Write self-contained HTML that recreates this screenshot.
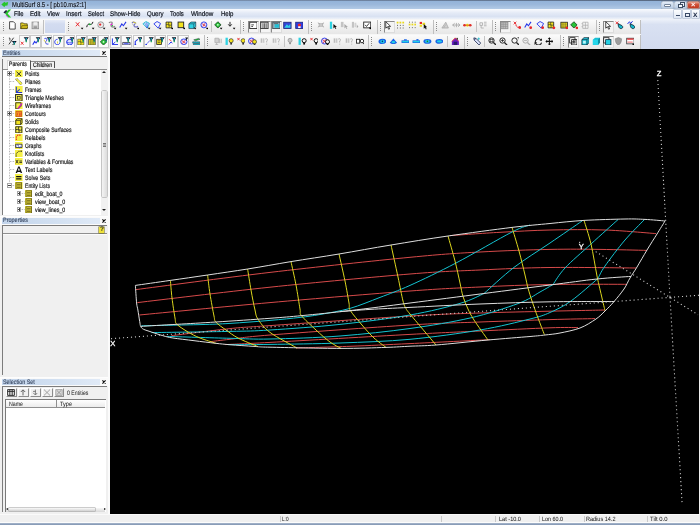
<!DOCTYPE html><html><head><meta charset="utf-8"><title>MultiSurf 8.5 - [ pb10.ms2:1]</title><style>
html,body{margin:0;padding:0;background:#000;}
body{width:700px;height:525px;overflow:hidden;position:relative;font-family:"Liberation Sans",sans-serif;}
#app{position:absolute;left:0;top:0;width:700px;height:525px;overflow:hidden;background:#f0f0f0;}
.abs{position:absolute;}
.t{position:absolute;white-space:nowrap;line-height:1;color:#111;transform-origin:0 0;}
#app{will-change:transform;}
#title{left:0;top:0;width:700px;height:9px;background:linear-gradient(to bottom,#7d99bd 0,#93b3d9 12%,#9bb8db 50%,#b2cae6 100%);}
#menu{left:0;top:9px;width:700px;height:10px;background:linear-gradient(to bottom,#f9fbfe 0,#e4eaf6 40%,#d9e2f2 75%,#eef2f9 100%);}
#tbarea{left:0;top:19px;width:700px;height:30px;background:linear-gradient(to bottom,#eef2fa 0,#d9e1f2 18%,#d2daee 100%);}
#tbl{left:0;top:19px;width:641px;height:30px;background:#f6f6f6;}
.chkbtn{position:absolute;width:11px;height:12.4px;box-sizing:border-box;border:0.8px solid #c9c9c9;background:#fbfbfb;}
.tb{position:absolute;height:14px;background:linear-gradient(to bottom,#fbfbfb 0,#f1f1f1 50%,#e6e6e6 100%);border-right:1px solid #bfbfbf;box-sizing:border-box;}
.grip{position:absolute;width:1px;height:9px;background-image:linear-gradient(to bottom,#8a8a8a 50%,transparent 50%);background-size:1px 2px;}
.sep{position:absolute;width:1px;height:11px;background:#c4c4c4;}
.ic{position:absolute;width:8.8px;height:8.8px;}
.selbtn{position:absolute;box-sizing:border-box;border:0.9px solid;border-color:#8a8a8a #dcdcdc #dcdcdc #8a8a8a;background:#f4f4f4;}
#left{left:0;top:49px;width:110px;height:465px;background:#f0f0f0;}
.hdr{position:absolute;left:2px;width:98px;height:5.7px;background:linear-gradient(to right,#c2d4eb 0,#d2e0f1 55%,#e0eaf7 100%);}
#canvas{left:110px;top:49px;width:589px;height:465px;background:#000;}
#status{left:0;top:514px;width:700px;height:11px;background:#f0f0f0;}
</style></head><body><div id="app"><div id="title" class="abs"><svg class="abs" style="left:1px;top:0.5px" width="7.5" height="7" viewBox="0 0 11 9"><path d="M0.5 4.5 L5 0.5 L6.5 2 L10.5 1 L9.5 6 L6 6.5 L5 8.5 Z" fill="#27c62b"/></svg><div class="t" style="left:12px;top:0.8px;font-size:7px;color:#0d1522;font-weight:normal;transform:rotate(0.03deg) scaleX(0.842);-webkit-text-stroke:0.2px #0d1522;text-shadow:0 0 1.5px #e6eef9,0 0 2.5px #dbe7f5;">MultiSurf 8.5 - [ pb10.ms2:1]</div><div class="abs" style="left:0;top:0;width:700px;height:0.7px;background:linear-gradient(to right,#8aa2c4,#56677f)"></div><div class="abs" style="left:661.5px;top:1.6px;width:11px;height:6px;border-radius:1px;background:linear-gradient(#e3ecf7,#b9cde6);box-shadow:0 0 0 0.6px #f2f6fb,0 0 0 1.1px #7c90ab"></div><div class="abs" style="left:664.5px;top:4.6px;width:5px;height:1.6px;background:#fff;box-shadow:0 0 0 0.6px #3d4d63"></div><div class="abs" style="left:674.5px;top:1.6px;width:11px;height:6px;border-radius:1px;background:linear-gradient(#e3ecf7,#b9cde6);box-shadow:0 0 0 0.6px #f2f6fb,0 0 0 1.1px #7c90ab"></div><div class="abs" style="left:679.5px;top:2.4px;width:3.6px;height:2.6px;border:0.7px solid #3d4d63;background:#eef3fa"></div><div class="abs" style="left:677.5px;top:3.8px;width:3.6px;height:2.6px;border:0.7px solid #3d4d63;background:#f6f9fd"></div><div class="abs" style="left:687.5px;top:1.6px;width:11.5px;height:6px;border-radius:1px;background:linear-gradient(#e7a392,#cf4f37 45%,#c23a22);box-shadow:0 0 0 0.6px #f2d9d3,0 0 0 1.1px #7a3a30"></div><div class="t" style="left:690.6px;top:0.9px;font-size:7.4px;color:#fff;font-weight:bold;transform:rotate(0.03deg);">&#215;</div></div><div id="menu" class="abs"><svg class="abs" style="left:3px;top:0.3px" width="9" height="9" viewBox="0 0 9 9"><path d="M8.2 0.6 L4.6 4.4 L8.2 8.4 L5.6 8.4 L2 4.4 L5.6 0.6 Z" fill="#27c62b"/><path d="M0.4 3.4 L3 1 L4.4 2 L2 4.4 Z" fill="#1a2238"/><path d="M3 6 L5 8.4" stroke="#b030c0" stroke-width="0.8"/></svg><div class="t" style="left:14px;top:1.7px;font-size:6.8px;color:#0e131d;font-weight:normal;transform:rotate(0.03deg) scaleX(0.867);-webkit-text-stroke:0.18px #0e131d;">File</div><div class="t" style="left:30px;top:1.7px;font-size:6.8px;color:#0e131d;font-weight:normal;transform:rotate(0.03deg) scaleX(0.896);-webkit-text-stroke:0.18px #0e131d;">Edit</div><div class="t" style="left:47px;top:1.7px;font-size:6.8px;color:#0e131d;font-weight:normal;transform:rotate(0.03deg) scaleX(0.855);-webkit-text-stroke:0.18px #0e131d;">View</div><div class="t" style="left:66px;top:1.7px;font-size:6.8px;color:#0e131d;font-weight:normal;transform:rotate(0.03deg) scaleX(0.911);-webkit-text-stroke:0.18px #0e131d;">Insert</div><div class="t" style="left:88px;top:1.7px;font-size:6.8px;color:#0e131d;font-weight:normal;transform:rotate(0.03deg) scaleX(0.847);-webkit-text-stroke:0.18px #0e131d;">Select</div><div class="t" style="left:110px;top:1.7px;font-size:6.8px;color:#0e131d;font-weight:normal;transform:rotate(0.03deg) scaleX(0.917);-webkit-text-stroke:0.18px #0e131d;">Show-Hide</div><div class="t" style="left:147px;top:1.7px;font-size:6.8px;color:#0e131d;font-weight:normal;transform:rotate(0.03deg) scaleX(0.891);-webkit-text-stroke:0.18px #0e131d;">Query</div><div class="t" style="left:170px;top:1.7px;font-size:6.8px;color:#0e131d;font-weight:normal;transform:rotate(0.03deg) scaleX(0.869);-webkit-text-stroke:0.18px #0e131d;">Tools</div><div class="t" style="left:191.3px;top:1.7px;font-size:6.8px;color:#0e131d;font-weight:normal;transform:rotate(0.03deg) scaleX(0.926);-webkit-text-stroke:0.18px #0e131d;">Window</div><div class="t" style="left:220.6px;top:1.7px;font-size:6.8px;color:#0e131d;font-weight:normal;transform:rotate(0.03deg) scaleX(0.887);-webkit-text-stroke:0.18px #0e131d;">Help</div><div class="abs" style="left:674px;top:1px;width:7px;height:7.5px;background:linear-gradient(#fdfeff,#dfe7f4);box-shadow:0 0 0 0.6px #a9b6cb"></div><div class="abs" style="left:683px;top:1px;width:7px;height:7.5px;background:linear-gradient(#fdfeff,#dfe7f4);box-shadow:0 0 0 0.6px #a9b6cb"></div><div class="abs" style="left:691.5px;top:1px;width:7px;height:7.5px;background:linear-gradient(#fdfeff,#dfe7f4);box-shadow:0 0 0 0.6px #a9b6cb"></div><div class="abs" style="left:676px;top:6.3px;width:3.5px;height:1px;background:#3a4a66"></div><div class="abs" style="left:685px;top:3.5px;width:3px;height:2.5px;border:0.7px solid #3a4a66"></div><div class="t" style="left:692.8px;top:1.7px;font-size:8px;color:#1f2c47;font-weight:bold;transform:rotate(0.03deg);">x</div></div><div id="tbarea" class="abs"></div><div id="tbl" class="abs"></div><div class="tb" style="left:0px;top:19.5px;width:44px"></div><div class="tb" style="left:66px;top:19.5px;width:175px"></div><div class="tb" style="left:241px;top:19.5px;width:68px"></div><div class="tb" style="left:309px;top:19.5px;width:69px"></div><div class="tb" style="left:378px;top:19.5px;width:56px"></div><div class="tb" style="left:434px;top:19.5px;width:59px"></div><div class="tb" style="left:493px;top:19.5px;width:104px"></div><div class="tb" style="left:597px;top:19.5px;width:44px"></div><div class="tb" style="left:0px;top:34.5px;width:205px"></div><div class="tb" style="left:205px;top:34.5px;width:164px"></div><div class="tb" style="left:369px;top:34.5px;width:96px"></div><div class="tb" style="left:465px;top:34.5px;width:96px"></div><div class="tb" style="left:561px;top:34.5px;width:80px"></div><div class="grip" style="left:3px;top:22.0px"></div><div class="grip" style="left:68px;top:22.0px"></div><div class="grip" style="left:243px;top:22.0px"></div><div class="grip" style="left:311px;top:22.0px"></div><div class="grip" style="left:380px;top:22.0px"></div><div class="grip" style="left:436px;top:22.0px"></div><div class="grip" style="left:495px;top:22.0px"></div><div class="grip" style="left:599px;top:22.0px"></div><div class="grip" style="left:3px;top:37.0px"></div><div class="grip" style="left:207px;top:37.0px"></div><div class="grip" style="left:371px;top:37.0px"></div><div class="grip" style="left:467px;top:37.0px"></div><div class="grip" style="left:563px;top:37.0px"></div><div class="selbtn" style="left:248px;top:20.5px;width:11px;height:12px"></div><div class="selbtn" style="left:259.5px;top:20.5px;width:11px;height:12px"></div><div class="selbtn" style="left:271px;top:20.5px;width:11px;height:12px"></div><div class="selbtn" style="left:383.5px;top:20.5px;width:11px;height:12px"></div><div class="selbtn" style="left:499.5px;top:20.5px;width:11px;height:12px"></div><div class="selbtn" style="left:603px;top:20.5px;width:11px;height:12px"></div><svg class="ic" style="left:248.5px;top:21.2px" viewBox="0 0 10 10"><rect x="0.8" y="1.4" width="8.4" height="7.2" fill="#fff" stroke="#222" stroke-width="1"/><path d="M2.6 4.4h3M2.6 6.2h2" stroke="#222" stroke-width="0.9"/></svg><svg class="ic" style="left:260px;top:21.2px" viewBox="0 0 10 10"><rect x="0.8" y="1.4" width="8.4" height="7.2" fill="#e2e2e2" stroke="#333" stroke-width="1"/><path d="M3.4 2.6v5.8M5.2 2.6v5.8M7 2.6v5.8" stroke="#333" stroke-width="0.8"/></svg><svg class="ic" style="left:271.5px;top:21.2px" viewBox="0 0 10 10"><rect x="0.8" y="1.4" width="8.4" height="7.2" fill="#9fb4be" stroke="#3a4a52" stroke-width="1"/><rect x="3" y="3.6" width="5" height="4" fill="#21c0d6"/><path d="M2 3h5" stroke="#444" stroke-width="0.8"/></svg><svg class="ic" style="left:283px;top:21.2px" viewBox="0 0 10 10"><rect x="0.8" y="1.4" width="8.4" height="7.2" fill="#3447d8" stroke="#1c2477" stroke-width="0.9"/><path d="M1.4 7.8l3-4.2 2 2 2-2.6v4.8z" fill="#31cfe6"/></svg><svg class="ic" style="left:294.5px;top:21.2px" viewBox="0 0 10 10"><rect x="0.8" y="1.4" width="8.4" height="7.2" fill="#2f3fe0" stroke="#1c2477" stroke-width="0.9"/><circle cx="5" cy="4.6" r="1.9" fill="#e8262a"/><rect x="3.6" y="6" width="2.8" height="2" fill="#fff"/></svg><svg class="ic" style="left:384px;top:21.2px" viewBox="0 0 10 10"><path d="M2 0.8v7.4l1.9-1.7 1.4 2.9 1.1-.6-1.4-2.7h2.5z" fill="#fff" stroke="#000" stroke-width="0.8"/></svg><svg class="ic" style="left:500px;top:21.2px" viewBox="0 0 10 10"><rect x="1" y="1.4" width="8" height="7.4" fill="#bdbdbd" stroke="#8c8c8c" stroke-width="0.9"/><path d="M1 3.8h8M1 6.2h8M3.6 1.4v7.4M6.2 1.4v7.4" stroke="#8c8c8c" stroke-width="0.6"/></svg><svg class="ic" style="left:603.5px;top:21.2px" viewBox="0 0 10 10"><path d="M2 0.8v7.4l1.9-1.7 1.4 2.9 1.1-.6-1.4-2.7h2.5z" fill="#fff" stroke="#000" stroke-width="0.8"/></svg><svg class="ic" style="left:8px;top:21.2px" viewBox="0 0 10 10"><path d="M1.8 0.8h4.4l2 2v6.4h-6.4z" fill="#fff" stroke="#222" stroke-width="0.9"/></svg><svg class="ic" style="left:19.5px;top:21.2px" viewBox="0 0 10 10"><path d="M0.8 2.2h3l0.8 1h3.6v5.4h-7.4z" fill="#e6d32a" stroke="#3a3205" stroke-width="0.8"/><path d="M0.8 8.6l1.8-3.6h7l-1.6 3.6z" fill="#c9b51b" stroke="#3a3205" stroke-width="0.6"/></svg><svg class="ic" style="left:30.5px;top:21.2px" viewBox="0 0 10 10"><rect x="1.2" y="1.2" width="7.6" height="7.6" fill="#cfcfcf" stroke="#8b8b8b" stroke-width="0.9"/><rect x="3" y="1.4" width="4" height="3" fill="#efefef"/><rect x="3" y="6" width="4" height="2.6" fill="#9a9a9a"/></svg><svg class="ic" style="left:75px;top:21.2px" viewBox="0 0 10 10"><path d="M1 1.5l4 4.5M5 1.5l-4 4.5" stroke="#e8262a" stroke-width="1.1"/><path d="M6.6 7.6h3l-1.5 2.2z" fill="#000"/></svg><svg class="ic" style="left:86px;top:21.2px" viewBox="0 0 10 10"><path d="M0.8 7c0.5-3 2-4 3.5-3.3s2.8 0 3.6-2.7" stroke="#111" stroke-width="1.1" fill="none"/><circle cx="4.3" cy="3.8" r="1.1" fill="#18c332"/><path d="M6.6 7.6h3l-1.5 2.2z" fill="#000"/></svg><svg class="ic" style="left:97px;top:21.2px" viewBox="0 0 10 10"><circle cx="4.3" cy="4.3" r="3.4" fill="#e9e9e9" stroke="#8a8a8a" stroke-width="0.9"/><circle cx="3.6" cy="4" r="1.3" fill="#e8262a"/><path d="M6.6 7.6h3l-1.5 2.2z" fill="#000"/></svg><svg class="ic" style="left:108px;top:21.2px" viewBox="0 0 10 10"><path d="M1 2c3-2 5 0 3 2s1 4 4 2" stroke="#8a8a8a" stroke-width="1.3" fill="none"/><circle cx="4" cy="4" r="1.2" fill="#e025d0"/><circle cx="5" cy="5.4" r="0.8" fill="#18c332"/><path d="M6.6 7.6h3l-1.5 2.2z" fill="#000"/></svg><svg class="ic" style="left:119px;top:21.2px" viewBox="0 0 10 10"><path d="M0.8 7.4l2.4-4 1.8 2 3-4.4" stroke="#2233e8" stroke-width="1.2" fill="none"/><path d="M6.6 7.6h3l-1.5 2.2z" fill="#000"/></svg><svg class="ic" style="left:130.5px;top:21.2px" viewBox="0 0 10 10"><path d="M1 2c3-2 5 0 3 2s1 4 4 2" stroke="#6a6ad8" stroke-width="1.2" fill="none"/><path d="M2 1l4 1.5" stroke="#d9c91e" stroke-width="1"/><path d="M1 3l5 4" stroke="#999" stroke-width="0.8"/><path d="M6.6 7.6h3l-1.5 2.2z" fill="#000"/></svg><svg class="ic" style="left:142px;top:21.2px" viewBox="0 0 10 10"><path d="M1 3.2l3.6-2.6 4 2.2-2.6 5.4z" fill="#c8f4f8" stroke="#13b8cc" stroke-width="0.9"/><path d="M3 2l2.6 6M5 1.4l1 6.2M7 2l-1 6" stroke="#2233e8" stroke-width="0.5"/><path d="M6.6 7.6h3l-1.5 2.2z" fill="#000"/></svg><svg class="ic" style="left:153px;top:21.2px" viewBox="0 0 10 10"><path d="M1 3.2l3.6-2.6 4 2.2-2.6 5.4z" fill="#f3f3ff" stroke="#2233e8" stroke-width="1"/><path d="M6.6 7.6h3l-1.5 2.2z" fill="#000"/></svg><svg class="ic" style="left:164.5px;top:21.2px" viewBox="0 0 10 10"><path d="M1.2 1.2h6.4v6.6h-6.4z" fill="#f2e21d" stroke="#222" stroke-width="0.9"/><path d="M1.2 4.4c2-1.6 4 1.6 6.4 0M4.4 1.2c-1.2 2 1.2 4.4 0 6.6" stroke="#222" stroke-width="0.7" fill="none"/><path d="M6.6 7.6h3l-1.5 2.2z" fill="#000"/></svg><svg class="ic" style="left:176.5px;top:21.2px" viewBox="0 0 10 10"><rect x="1.2" y="1.2" width="6.4" height="6.4" fill="#f2e21d" stroke="#222" stroke-width="1"/><path d="M6.6 7.6h3l-1.5 2.2z" fill="#000"/></svg><svg class="ic" style="left:188px;top:21.2px" viewBox="0 0 10 10"><path d="M1 3.2l2.4-2h5.4v5l-2.2 2.4h-5.6z" fill="#2fd2e2" stroke="#1a3c50" stroke-width="0.8"/><path d="M1 3.2h5.6v5.4M6.6 3.2l2.2-2" stroke="#1a3c50" stroke-width="0.7" fill="none"/><path d="M6.6 7.6h3l-1.5 2.2z" fill="#000"/></svg><svg class="ic" style="left:199.5px;top:21.2px" viewBox="0 0 10 10"><circle cx="4.4" cy="4.4" r="3.4" fill="#dfe3ff" stroke="#2233e8" stroke-width="1"/><path d="M2.4 3l4 3M6 2.4l-3 4" stroke="#e8262a" stroke-width="0.9"/><path d="M6.6 7.6h3l-1.5 2.2z" fill="#000"/></svg><svg class="ic" style="left:214px;top:21.2px" viewBox="0 0 10 10"><path d="M4.4 0.8l3.6 3.6-3.6 3.6-3.6-3.6z" fill="#27c437" stroke="#1b3d1f" stroke-width="0.9"/><circle cx="4.4" cy="4.4" r="1" fill="#d8ffd8"/><path d="M6.6 7.6h3l-1.5 2.2z" fill="#000"/></svg><svg class="ic" style="left:227px;top:21.2px" viewBox="0 0 10 10"><path d="M3.4 1v4.6M1.4 3.8l2 2.2 2-2.2" stroke="#222" stroke-width="1.1" fill="none"/><path d="M6.6 7.6h3l-1.5 2.2z" fill="#000"/></svg><svg class="ic" style="left:317px;top:21.2px" viewBox="0 0 10 10"><path d="M1 2l7 5M1 7l7-5M2 4.5h5" stroke="#a9a9a9" stroke-width="1.1" fill="none"/><rect x="2.4" y="3" width="4" height="3" fill="#c9c9c9" stroke="#a9a9a9" stroke-width="0.6"/></svg><svg class="ic" style="left:328.5px;top:21.2px" viewBox="0 0 10 10"><rect x="1" y="0.8" width="2.6" height="8.2" fill="#2fd2e2"/><path d="M5 3.4v5l1.4-1.2 1 2 .9-.5-1-1.9h1.8z" fill="#111"/></svg><svg class="ic" style="left:340px;top:21.2px" viewBox="0 0 10 10"><rect x="1" y="1" width="3" height="6" fill="#c4c4c4"/><path d="M5 3.4v5l1.4-1.2 1 2 .9-.5-1-1.9h1.8z" fill="#a9a9a9"/></svg><svg class="ic" style="left:351px;top:21.2px" viewBox="0 0 10 10"><rect x="1" y="1" width="2.4" height="6.6" fill="#c4c4c4"/><rect x="4" y="2" width="2" height="5" fill="#d2d2d2"/><path d="M6.6 4v4l1.8-1.4z" fill="#a9a9a9"/></svg><svg class="ic" style="left:362.5px;top:21.2px" viewBox="0 0 10 10"><rect x="0.8" y="1.2" width="8" height="6.6" fill="#fff" stroke="#222" stroke-width="1"/><path d="M2.4 4.4l1.6 1.8 3-3.6" stroke="#222" stroke-width="1" fill="none"/><path d="M6.6 7.4h3l-1.5 2.2z" fill="#000"/></svg><svg class="ic" style="left:396px;top:21.2px" viewBox="0 0 10 10"><g fill="#e9d81c"><rect x="0.8" y="0.8" width="2" height="2"/><rect x="4" y="0.8" width="2" height="2"/><rect x="7.2" y="0.8" width="2" height="2"/></g><g fill="#555"><rect x="1.2" y="4.4" width="1.1" height="1.1"/><rect x="4.4" y="4.4" width="1.1" height="1.1"/><rect x="7.6" y="4.4" width="1.1" height="1.1"/><rect x="1.2" y="7.4" width="1.1" height="1.1"/><rect x="4.4" y="7.4" width="1.1" height="1.1"/><rect x="7.6" y="7.4" width="1.1" height="1.1"/></g></svg><svg class="ic" style="left:407.5px;top:21.2px" viewBox="0 0 10 10"><g fill="#e9d81c"><rect x="0.8" y="3" width="2" height="2"/><rect x="4" y="3" width="2" height="2"/><rect x="7.2" y="3" width="2" height="2"/></g><g fill="#666"><rect x="1.2" y="0.8" width="1.1" height="1.1"/><rect x="4.4" y="0.8" width="1.1" height="1.1"/><rect x="7.6" y="0.8" width="1.1" height="1.1"/><rect x="1.2" y="7" width="1.1" height="1.1"/><rect x="4.4" y="7" width="1.1" height="1.1"/><rect x="7.6" y="7" width="1.1" height="1.1"/></g></svg><svg class="ic" style="left:418.5px;top:21.2px" viewBox="0 0 10 10"><rect x="0.8" y="1" width="2.6" height="2.4" fill="#e8262a"/><rect x="0.8" y="4.2" width="2.6" height="2.4" fill="#e9d81c"/><rect x="4" y="2" width="3" height="2.4" fill="#e9d81c"/><path d="M5.4 3.4v5.4l1.4-1.2 1 2 .9-.5-1-1.9h1.8z" fill="#111"/></svg><svg class="ic" style="left:440.5px;top:21.2px" viewBox="0 0 10 10"><path d="M1 8l4.4-6.6 3 6.6z" fill="#d0d0d0" stroke="#a9a9a9" stroke-width="0.9"/><path d="M3 8l2.4-4" stroke="#a9a9a9" stroke-width="0.7"/></svg><svg class="ic" style="left:452px;top:21.2px" viewBox="0 0 10 10"><path d="M0.6 4.6h8.6M3 2.6l-2.2 2 2.2 2M6.8 2.6l2.2 2-2.2 2M5 2.2v4.8" stroke="#a9a9a9" stroke-width="1" fill="none"/></svg><svg class="ic" style="left:463px;top:21.2px" viewBox="0 0 10 10"><circle cx="1.8" cy="4.8" r="1.5" fill="#e8262a"/><circle cx="5" cy="4.8" r="1.7" fill="#f0dc1c"/><circle cx="8.2" cy="4.8" r="1.5" fill="#e8262a"/><path d="M0.4 4.8h9.2" stroke="#d04020" stroke-width="0.7"/></svg><svg class="ic" style="left:479px;top:21.2px" viewBox="0 0 10 10"><path d="M1 2h3v3h-3zM5.6 1.4h3M5.6 3.4h3M5.6 5.4h3M2.4 5v3h3" stroke="#a9a9a9" stroke-width="0.9" fill="none"/></svg><svg class="ic" style="left:512.5px;top:21.2px" viewBox="0 0 10 10"><path d="M0.8 0.8l3 3M3.8 0.8l-3 3" stroke="#e8262a" stroke-width="1"/><path d="M3 4c1 3 3 4 5 3" stroke="#e8262a" stroke-width="1" fill="none"/><circle cx="7.6" cy="7.4" r="1.6" fill="#e8262a"/></svg><svg class="ic" style="left:524px;top:21.2px" viewBox="0 0 10 10"><path d="M0.8 7.4l2.4-4 1.8 2 3-4.4" stroke="#2233e8" stroke-width="1.2" fill="none"/><circle cx="7.6" cy="7.6" r="1.6" fill="#e8262a"/></svg><svg class="ic" style="left:535.5px;top:21.2px" viewBox="0 0 10 10"><path d="M1 3.2l3.6-2.6 4 2.2-2.6 5.4z" fill="#eef" stroke="#2233e8" stroke-width="1"/><circle cx="7.6" cy="7.6" r="1.6" fill="#e8262a"/></svg><svg class="ic" style="left:547px;top:21.2px" viewBox="0 0 10 10"><path d="M1.2 1.2h6.4v6.6h-6.4z" fill="#f2e21d" stroke="#222" stroke-width="0.9"/><path d="M1.2 4.4c2-1.6 4 1.6 6.4 0M4.4 1.2c-1.2 2 1.2 4.4 0 6.6" stroke="#222" stroke-width="0.7" fill="none"/><circle cx="7.8" cy="7.8" r="1.6" fill="#e8262a"/></svg><svg class="ic" style="left:559.5px;top:21.2px" viewBox="0 0 10 10"><rect x="1" y="1.4" width="7.4" height="6.6" fill="#f2e21d" stroke="#222" stroke-width="0.9"/><path d="M1 3.6h7.4M1 5.8h7.4M3.4 1.4v6.6M6 1.4v6.6" stroke="#333" stroke-width="0.4"/><circle cx="7.8" cy="7.8" r="1.6" fill="#e8262a"/></svg><svg class="ic" style="left:569.5px;top:21.2px" viewBox="0 0 10 10"><path d="M4.4 0.8l3.6 3.6-3.6 3.6-3.6-3.6z" fill="#27c437" stroke="#1b3d1f" stroke-width="0.9"/><circle cx="7.8" cy="7.8" r="1.6" fill="#e8262a"/></svg><svg class="ic" style="left:581px;top:21.2px" viewBox="0 0 10 10"><path d="M2 1.4h6v7h-6zM2 4.8h6M5 1.4v7M0.6 3h1.4M0.6 6.4h1.4" stroke="#a9a9a9" stroke-width="0.8" fill="none"/></svg><svg class="ic" style="left:615px;top:21.2px" viewBox="0 0 10 10"><path d="M0.8 0.6l3 3M3.8 0.6l-3 3" stroke="#e8262a" stroke-width="1"/><path d="M3.4 3l4.4 2.2c1.4.8 1.4 3-.4 3.4s-2.8-1-3.4-2.2z" fill="#19b6c9" stroke="#0c2030" stroke-width="0.9"/></svg><svg class="ic" style="left:626.5px;top:21.2px" viewBox="0 0 10 10"><path d="M0.6 3.4l2.2-2.6 1.4 2 2.2-2.6" stroke="#2233e8" stroke-width="1.1" fill="none"/><path d="M3.4 3l4.4 2.2c1.4.8 1.4 3-.4 3.4s-2.8-1-3.4-2.2z" fill="#19b6c9" stroke="#0c2030" stroke-width="0.9"/></svg><div class="sep" style="left:211px;top:21.0px"></div><div class="sep" style="left:476px;top:21.0px"></div><div class="chkbtn" style="left:18.5px;top:35.3px"></div><div class="chkbtn" style="left:29.9px;top:35.3px"></div><div class="chkbtn" style="left:41.3px;top:35.3px"></div><div class="chkbtn" style="left:52.7px;top:35.3px"></div><div class="chkbtn" style="left:64.1px;top:35.3px"></div><div class="chkbtn" style="left:75.5px;top:35.3px"></div><div class="chkbtn" style="left:86.9px;top:35.3px"></div><div class="chkbtn" style="left:98.3px;top:35.3px"></div><div class="chkbtn" style="left:109.7px;top:35.3px"></div><div class="chkbtn" style="left:121.1px;top:35.3px"></div><div class="chkbtn" style="left:132.5px;top:35.3px"></div><div class="chkbtn" style="left:143.9px;top:35.3px"></div><div class="chkbtn" style="left:155.3px;top:35.3px"></div><div class="chkbtn" style="left:166.7px;top:35.3px"></div><div class="chkbtn" style="left:178.1px;top:35.3px"></div><div class="selbtn" style="left:568px;top:35.5px;width:11px;height:12px"></div><div class="selbtn" style="left:602.5px;top:35.5px;width:11px;height:12px"></div><svg class="ic" style="left:568.5px;top:36.7px" viewBox="0 0 10 10"><rect x="0.800" y="0.800" width="6" height="6" fill="#fff" stroke="#111" stroke-width="0.900"/><rect x="3" y="3" width="6" height="6" fill="none" stroke="#111" stroke-width="0.900"/><path d="M3 5h3.800M5 3v3.800" stroke="#111" stroke-width="0.700"/></svg><svg class="ic" style="left:603px;top:36.7px" viewBox="0 0 10 10"><rect x="0.800" y="0.800" width="6" height="6" fill="#fff" stroke="#111" stroke-width="0.900"/><rect x="3" y="3" width="6" height="6" fill="#25cfe2" stroke="#0c2a3a" stroke-width="0.900"/></svg><svg class="ic" style="left:8px;top:36.7px" viewBox="0 0 10 10"><path d="M1 8.4l5.4-7.6" stroke="#111" stroke-width="0.9"/><path d="M1 1.2h1.2v3M4.6 9h2.2" stroke="#111" stroke-width="0.8" fill="none"/><g transform="translate(0.4,4.2) scale(0.95)"><path d="M4.2 0.3h5.8l-2.1 2.8v1.6h-1.6v-1.6z" fill="#0b1020"/><path d="M6.3 1.2h1.6l-.5 2.2v2.4h-.8v-2.4z" fill="#19c0d2"/><rect x="6.5" y="4.4" width="1.2" height="1.6" fill="#1fae4a"/></g></svg><svg class="ic" style="left:20px;top:36.7px" viewBox="0 0 10 10"><path d="M1 5.4l3 3.4M4 5.4l-3 3.4" stroke="#e8262a" stroke-width="1"/><path d="M4.2 0.3h5.8l-2.1 2.8v1.6h-1.6v-1.6z" fill="#0b1020"/><path d="M6.3 1.2h1.6l-.5 2.2v2.4h-.8v-2.4z" fill="#19c0d2"/><rect x="6.5" y="4.4" width="1.2" height="1.6" fill="#1fae4a"/></svg><svg class="ic" style="left:31.5px;top:36.7px" viewBox="0 0 10 10"><path d="M0.8 8.8l2.2-3.8 1.6 1.8 2-2.6" stroke="#2233e8" stroke-width="1.2" fill="none"/><path d="M4.2 0.3h5.8l-2.1 2.8v1.6h-1.6v-1.6z" fill="#0b1020"/><path d="M6.3 1.2h1.6l-.5 2.2v2.4h-.8v-2.4z" fill="#19c0d2"/><rect x="6.5" y="4.4" width="1.2" height="1.6" fill="#1fae4a"/></svg><svg class="ic" style="left:43px;top:36.7px" viewBox="0 0 10 10"><path d="M1.6 2c2.6-1.6 3.6 1 2 2.6s-0.4 4 2.6 3.4" stroke="#2233e8" stroke-width="1.1" fill="none"/><path d="M1 3.4l2.4 3" stroke="#d9c91e" stroke-width="0.9"/><path d="M4.2 0.3h5.8l-2.1 2.8v1.6h-1.6v-1.6z" fill="#0b1020"/><path d="M6.3 1.2h1.6l-.5 2.2v2.4h-.8v-2.4z" fill="#19c0d2"/><rect x="6.5" y="4.4" width="1.2" height="1.6" fill="#1fae4a"/></svg><svg class="ic" style="left:54px;top:36.7px" viewBox="0 0 10 10"><path d="M4 2.6c-3 0-4 3.4-2.4 5.2s5 1 5-1.6" stroke="#2233e8" stroke-width="1.1" fill="none"/><path d="M4 5v2.4" stroke="#d9c91e" stroke-width="0.9"/><path d="M4.2 0.3h5.8l-2.1 2.8v1.6h-1.6v-1.6z" fill="#0b1020"/><path d="M6.3 1.2h1.6l-.5 2.2v2.4h-.8v-2.4z" fill="#19c0d2"/><rect x="6.5" y="4.4" width="1.2" height="1.6" fill="#1fae4a"/></svg><svg class="ic" style="left:65.5px;top:36.7px" viewBox="0 0 10 10"><ellipse cx="4.2" cy="5.8" rx="3.5" ry="3.2" fill="#dfe3ff" stroke="#2233e8" stroke-width="1.1"/><path d="M0.8 5.8c2 1.2 5 1.2 7 0" stroke="#2233e8" stroke-width="0.8" fill="none"/><path d="M4.2 0.3h5.8l-2.1 2.8v1.6h-1.6v-1.6z" fill="#0b1020"/><path d="M6.3 1.2h1.6l-.5 2.2v2.4h-.8v-2.4z" fill="#19c0d2"/><rect x="6.5" y="4.4" width="1.2" height="1.6" fill="#1fae4a"/></svg><svg class="ic" style="left:77px;top:36.7px" viewBox="0 0 10 10"><path d="M0.8 2.4h7v6.6h-7z" fill="#f6e81f" stroke="#333" stroke-width="0.6"/><path d="M0.8 5.6c2-1.6 4.4 1.6 7 0M4.2 2.4c-1.2 2 1.2 4.4 0 6.6" stroke="#222" stroke-width="0.6" fill="none"/><path d="M4.2 0.3h5.8l-2.1 2.8v1.6h-1.6v-1.6z" fill="#0b1020"/><path d="M6.3 1.2h1.6l-.5 2.2v2.4h-.8v-2.4z" fill="#19c0d2"/><rect x="6.5" y="4.4" width="1.2" height="1.6" fill="#1fae4a"/></svg><svg class="ic" style="left:88px;top:36.7px" viewBox="0 0 10 10"><rect x="0.8" y="2.4" width="7.4" height="6.6" fill="#f6e81f" stroke="#222" stroke-width="0.7"/><path d="M0.8 4.6h7.4M0.8 6.8h7.4M3.2 2.4v6.6M5.8 2.4v6.6" stroke="#333" stroke-width="0.45"/><path d="M4.2 0.3h5.8l-2.1 2.8v1.6h-1.6v-1.6z" fill="#0b1020"/><path d="M6.3 1.2h1.6l-.5 2.2v2.4h-.8v-2.4z" fill="#19c0d2"/><rect x="6.5" y="4.4" width="1.2" height="1.6" fill="#1fae4a"/></svg><svg class="ic" style="left:99.5px;top:36.7px" viewBox="0 0 10 10"><path d="M4 2l3.6 3.6-3.6 3.6-3.6-3.6z" fill="#27c437" stroke="#1b3d1f" stroke-width="0.9"/><circle cx="4" cy="5.6" r="1" fill="#d8ffd8"/><path d="M4.2 0.3h5.8l-2.1 2.8v1.6h-1.6v-1.6z" fill="#0b1020"/><path d="M6.3 1.2h1.6l-.5 2.2v2.4h-.8v-2.4z" fill="#19c0d2"/><rect x="6.5" y="4.4" width="1.2" height="1.6" fill="#1fae4a"/></svg><svg class="ic" style="left:111px;top:36.7px" viewBox="0 0 10 10"><path d="M1.6 1.6v7h6.4M1.6 8.6l3.4-3" stroke="#2233e8" stroke-width="1.1" fill="none"/><path d="M4.2 0.3h5.8l-2.1 2.8v1.6h-1.6v-1.6z" fill="#0b1020"/><path d="M6.3 1.2h1.6l-.5 2.2v2.4h-.8v-2.4z" fill="#19c0d2"/><rect x="6.5" y="4.4" width="1.2" height="1.6" fill="#1fae4a"/></svg><svg class="ic" style="left:122px;top:36.7px" viewBox="0 0 10 10"><path d="M0.8 6.2h8.4v2.8h-8.4z" fill="#cfd3ff" stroke="#223" stroke-width="0.8"/><path d="M2.4 7.6h5" stroke="#2233e8" stroke-width="0.9"/><path d="M4.2 0.3h5.8l-2.1 2.8v1.6h-1.6v-1.6z" fill="#0b1020"/><path d="M6.3 1.2h1.6l-.5 2.2v2.4h-.8v-2.4z" fill="#19c0d2"/><rect x="6.5" y="4.4" width="1.2" height="1.6" fill="#1fae4a"/></svg><svg class="ic" style="left:133.5px;top:36.7px" viewBox="0 0 10 10"><path d="M1.4 9v-4l3-2.4" stroke="#2233e8" stroke-width="1.2" fill="none"/><circle cx="1.6" cy="8.6" r="0.9" fill="#2233e8"/><path d="M4.2 0.3h5.8l-2.1 2.8v1.6h-1.6v-1.6z" fill="#0b1020"/><path d="M6.3 1.2h1.6l-.5 2.2v2.4h-.8v-2.4z" fill="#19c0d2"/><rect x="6.5" y="4.4" width="1.2" height="1.6" fill="#1fae4a"/></svg><svg class="ic" style="left:145px;top:36.7px" viewBox="0 0 10 10"><path d="M1 9l5.4-6" stroke="#2233e8" stroke-width="1.1" stroke-dasharray="1.6 0.8"/><circle cx="1.4" cy="8.6" r="0.9" fill="#2233e8"/><path d="M4.2 0.3h5.8l-2.1 2.8v1.6h-1.6v-1.6z" fill="#0b1020"/><path d="M6.3 1.2h1.6l-.5 2.2v2.4h-.8v-2.4z" fill="#19c0d2"/><rect x="6.5" y="4.4" width="1.2" height="1.6" fill="#1fae4a"/></svg><svg class="ic" style="left:156px;top:36.7px" viewBox="0 0 10 10"><rect x="0.8" y="2.6" width="5.4" height="6" fill="#f2e21d" stroke="#222" stroke-width="0.9"/><path d="M2 4.4h3M2 6.4h3" stroke="#222" stroke-width="0.7"/><path d="M4.2 0.3h5.8l-2.1 2.8v1.6h-1.6v-1.6z" fill="#0b1020"/><path d="M6.3 1.2h1.6l-.5 2.2v2.4h-.8v-2.4z" fill="#19c0d2"/><rect x="6.5" y="4.4" width="1.2" height="1.6" fill="#1fae4a"/></svg><svg class="ic" style="left:167.5px;top:36.7px" viewBox="0 0 10 10"><path d="M0.8 8.6l2.6-3 1.6 1.4" stroke="#2233e8" stroke-width="1.1" fill="none"/><path d="M1 2.6l3 2" stroke="#e8262a" stroke-width="0.9"/><path d="M4.2 0.3h5.8l-2.1 2.8v1.6h-1.6v-1.6z" fill="#0b1020"/><path d="M6.3 1.2h1.6l-.5 2.2v2.4h-.8v-2.4z" fill="#19c0d2"/><rect x="6.5" y="4.4" width="1.2" height="1.6" fill="#1fae4a"/></svg><svg class="ic" style="left:179.5px;top:36.7px" viewBox="0 0 10 10"><ellipse cx="4.4" cy="5.4" rx="3.6" ry="3.2" fill="#e6e0ff" stroke="#2233e8" stroke-width="1"/><path d="M2 4l4.4 3M6 3.6l-3.4 4" stroke="#e8262a" stroke-width="0.9"/><path d="M5.8 0.6h3.6l-1.4 2v1.6h-.9v-1.6z" fill="#101828"/></svg><svg class="ic" style="left:191.5px;top:36.7px" viewBox="0 0 10 10"><path d="M0.8 5.4h8v1.6h-8zM1.6 7.6h8v1.6h-8z" fill="#1fc6d8" stroke="#123" stroke-width="0.5"/><path d="M2 3.2l5.6-1.6 1.6 1-5.4 1.8z" fill="#27c437" stroke="#123" stroke-width="0.5"/></svg><svg class="ic" style="left:213.5px;top:36.7px" viewBox="0 0 10 10"><path d="M1 1.4h4.4v5h-4.4z" fill="#cfcfcf" stroke="#a9a9a9" stroke-width="0.8"/><path d="M3 6.4v2.4M1.4 8.8h3.4M6.4 2v5M8.2 2v5" stroke="#a9a9a9" stroke-width="0.9"/></svg><svg class="ic" style="left:225px;top:36.7px" viewBox="0 0 10 10"><rect x="0.6" y="0.8" width="2.6" height="8.2" fill="#2fd2e2"/><circle cx="7" cy="4.2" r="2.3" fill="#f4e21c" stroke="#333" stroke-width="0.8"/><rect x="6" y="6.4" width="2" height="2.2" fill="#333"/></svg><svg class="ic" style="left:236.5px;top:36.7px" viewBox="0 0 10 10"><path d="M0.4 1l2.6 2.8M3 1l-2.6 2.8" stroke="#e8262a" stroke-width="1"/><circle cx="7" cy="4.2" r="2.3" fill="#f4e21c" stroke="#333" stroke-width="0.8"/><rect x="6" y="6.4" width="2" height="2.2" fill="#333"/></svg><svg class="ic" style="left:248px;top:36.7px" viewBox="0 0 10 10"><circle cx="4" cy="4.6" r="3.4" fill="#e6e0ff" stroke="#2233e8" stroke-width="1"/><path d="M1.8 3l4 3.4M5.6 2.6l-3.4 4.4" stroke="#e8262a" stroke-width="0.9"/><circle cx="7.4" cy="5.4" r="2.3" fill="#f4e21c" stroke="#333" stroke-width="0.8"/><rect x="6.4" y="7.6000000000000005" width="2" height="2.2" fill="#333"/></svg><svg class="ic" style="left:260px;top:36.7px" viewBox="0 0 10 10"><rect x="0.8" y="1.6" width="1.8" height="5" fill="#bcbcbc"/><rect x="3.2" y="1.6" width="1.8" height="5" fill="#c8c8c8"/><path d="M6 2.4c2-1.4 3.4.8 1.6 2.2v1.6M7.6 7.6v1" stroke="#a9a9a9" stroke-width="1" fill="none"/></svg><svg class="ic" style="left:271.5px;top:36.7px" viewBox="0 0 10 10"><rect x="0.8" y="1.6" width="1.8" height="5" fill="#bcbcbc"/><rect x="3.2" y="1.6" width="1.8" height="5" fill="#c8c8c8"/><path d="M6 2.4c2-1.4 3.4.8 1.6 2.2v1.6M7.6 7.6v1" stroke="#a9a9a9" stroke-width="1" fill="none"/></svg><svg class="ic" style="left:286px;top:36.7px" viewBox="0 0 10 10"><circle cx="4.6" cy="3.8" r="2.3" fill="#c9c9c9" stroke="#8f8f8f" stroke-width="0.8"/><rect x="3.5999999999999996" y="6.0" width="2" height="2.2" fill="#8f8f8f"/></svg><svg class="ic" style="left:298px;top:36.7px" viewBox="0 0 10 10"><rect x="0.6" y="0.8" width="2.6" height="8.2" fill="#2fd2e2"/><circle cx="7" cy="4.2" r="2.3" fill="#f4f4f4" stroke="#0a0a0a" stroke-width="1.1"/><rect x="6" y="6.4" width="2" height="2.2" fill="#0a0a0a"/></svg><svg class="ic" style="left:309.5px;top:36.7px" viewBox="0 0 10 10"><path d="M0.4 1l2.6 2.8M3 1l-2.6 2.8" stroke="#e8262a" stroke-width="1"/><circle cx="7" cy="4.2" r="2.3" fill="#f4f4f4" stroke="#0a0a0a" stroke-width="1.1"/><rect x="6" y="6.4" width="2" height="2.2" fill="#0a0a0a"/></svg><svg class="ic" style="left:321px;top:36.7px" viewBox="0 0 10 10"><circle cx="4" cy="4.6" r="3.4" fill="#e6e0ff" stroke="#2233e8" stroke-width="1"/><path d="M1.8 3l4 3.4M5.6 2.6l-3.4 4.4" stroke="#e8262a" stroke-width="0.9"/><circle cx="7.4" cy="5.4" r="2.3" fill="#f4f4f4" stroke="#0a0a0a" stroke-width="1.1"/><rect x="6.4" y="7.6000000000000005" width="2" height="2.2" fill="#0a0a0a"/></svg><svg class="ic" style="left:333px;top:36.7px" viewBox="0 0 10 10"><rect x="0.8" y="1.6" width="1.8" height="5" fill="#bcbcbc"/><rect x="3.2" y="1.6" width="1.8" height="5" fill="#c8c8c8"/><path d="M6 2.4c2-1.4 3.4.8 1.6 2.2v1.6M7.6 7.6v1" stroke="#a9a9a9" stroke-width="1" fill="none"/></svg><svg class="ic" style="left:344.5px;top:36.7px" viewBox="0 0 10 10"><rect x="0.8" y="1.6" width="1.8" height="5" fill="#bcbcbc"/><rect x="3.2" y="1.6" width="1.8" height="5" fill="#c8c8c8"/><path d="M6 2.4c2-1.4 3.4.8 1.6 2.2v1.6M7.6 7.6v1" stroke="#a9a9a9" stroke-width="1" fill="none"/></svg><svg class="ic" style="left:355.5px;top:36.7px" viewBox="0 0 10 10"><rect x="0.6" y="2.6" width="3.6" height="4.4" fill="#fff" stroke="#222" stroke-width="1"/><circle cx="6.8" cy="4.6" r="2" fill="#fff" stroke="#222" stroke-width="1.1"/><path d="M7.6 6.2l1.4 2" stroke="#222" stroke-width="1.1"/></svg><svg class="ic" style="left:377.5px;top:36.7px" viewBox="0 0 10 10"><ellipse cx="5" cy="5" rx="4.4" ry="3" fill="#1a63e6"/><ellipse cx="5" cy="5" rx="2.4" ry="2" fill="#22d0e6"/><circle cx="5" cy="5" r="0.9" fill="#0a2a7a"/></svg><svg class="ic" style="left:389px;top:36.7px" viewBox="0 0 10 10"><path d="M0.8 6.4l4.2-4.8 4.2 4.8c-2 2-6.4 2-8.400 0z" fill="#1a63e6"/><ellipse cx="5" cy="5.8" rx="2.2" ry="1.3" fill="#22d0e6"/></svg><svg class="ic" style="left:400.5px;top:36.7px" viewBox="0 0 10 10"><path d="M0.6 3.800h8.800v3h-8.800z" fill="#1a63e6"/><path d="M1.400 4.400h7.200v1.700h-7.200z" fill="#22d0e6"/><path d="M3.400 2.600h3.200v1.400h-3.200z" fill="#1a63e6"/></svg><svg class="ic" style="left:411.5px;top:36.7px" viewBox="0 0 10 10"><path d="M0.600 3.800h8.800v3h-8.800z" fill="#1a63e6"/><path d="M1.400 4.400h7.200v1.700h-7.200z" fill="#22d0e6"/><path d="M5 2.400h2.400v1.600h-2.400z" fill="#1a63e6"/></svg><svg class="ic" style="left:423px;top:36.7px" viewBox="0 0 10 10"><ellipse cx="5" cy="5" rx="4.500" ry="2.700" fill="#1a63e6"/><ellipse cx="5" cy="5" rx="2.600" ry="1.500" fill="#22d0e6"/><circle cx="5" cy="5" r="0.900" fill="#157a3a"/></svg><svg class="ic" style="left:434.5px;top:36.7px" viewBox="0 0 10 10"><ellipse cx="5" cy="5" rx="4.500" ry="2.700" fill="#1a63e6"/><ellipse cx="5" cy="5" rx="3" ry="1.300" fill="#22d0e6"/></svg><svg class="ic" style="left:450.5px;top:36.7px" viewBox="0 0 10 10"><path d="M1 5l4-4 4 4v4h-8z" fill="#6a1fc0"/><path d="M1 5l4-4 4 4" stroke="#e8262a" stroke-width="1" fill="none"/><rect x="3" y="5.400" width="4" height="3.600" fill="#2a1a6a"/><rect x="6.400" y="1" width="1.400" height="2" fill="#222"/></svg><svg class="ic" style="left:472.5px;top:36.7px" viewBox="0 0 10 10"><path d="M1 1l2.400 0.600 5.400 5.400-2 2-5.400-5.400z" fill="#dfe6ff" stroke="#0c1a40" stroke-width="0.900"/><path d="M3.400 1.600l-1.800 1.800" stroke="#0c1a40" stroke-width="0.700"/><path d="M6.400 0.600v3M5 2h3" stroke="#19b6c9" stroke-width="0.800"/></svg><svg class="ic" style="left:487.5px;top:36.7px" viewBox="0 0 10 10"><circle cx="4" cy="4" r="3" fill="#f4f4f4" stroke="#222" stroke-width="1.100"/><rect x="2.400" y="2.600" width="3.200" height="2.800" fill="none" stroke="#222" stroke-width="0.700"/><path d="M6.200 6.200l3 3" stroke="#222" stroke-width="1.500"/></svg><svg class="ic" style="left:499px;top:36.7px" viewBox="0 0 10 10"><circle cx="4" cy="4" r="3" fill="#f4f4f4" stroke="#222" stroke-width="1.100"/><path d="M2.400 4h3.200M4 2.400v3.200" stroke="#222" stroke-width="0.900"/><path d="M6.200 6.200l3 3" stroke="#222" stroke-width="1.500"/></svg><svg class="ic" style="left:510.5px;top:36.7px" viewBox="0 0 10 10"><circle cx="4" cy="4" r="3" fill="#f4f4f4" stroke="#222" stroke-width="1.100"/><path d="M6.200 6.200l3 3" stroke="#222" stroke-width="1.500"/><path d="M7.400 0.800h2v2" stroke="#222" stroke-width="0.900" fill="none"/></svg><svg class="ic" style="left:522px;top:36.7px" viewBox="0 0 10 10"><circle cx="4" cy="4" r="3" fill="#ececec" stroke="#a9a9a9" stroke-width="1.100"/><path d="M2.400 4h3.200" stroke="#a9a9a9" stroke-width="0.900"/><path d="M6.200 6.200l3 3" stroke="#a9a9a9" stroke-width="1.500"/></svg><svg class="ic" style="left:533.5px;top:36.7px" viewBox="0 0 10 10"><path d="M8 3.400a3.600 3.600 0 1 0 0.600 3" stroke="#222" stroke-width="1.200" fill="none"/><path d="M9.400 1v3.200h-3.200z" fill="#222"/><path d="M0.600 9v-3h3z" fill="#222"/></svg><svg class="ic" style="left:544.5px;top:36.7px" viewBox="0 0 10 10"><path d="M5 0.400l1.800 2h-1.200v2h2v-1.200l2 1.800-2 1.800v-1.200h-2v2h1.200l-1.800 2-1.800-2h1.200v-2h-2v1.200l-2-1.800 2-1.800v1.200h2v-2h-1.200z" fill="#111"/></svg><svg class="ic" style="left:580.5px;top:36.7px" viewBox="0 0 10 10"><path d="M1 3l2.400-2.200h5.800v5.400l-2.400 2.800h-5.800z" fill="#25cfe2" stroke="#0c2a3a" stroke-width="0.900"/><path d="M1 3h5.800v6M6.800 3l2.400-2.200" stroke="#0c2a3a" stroke-width="0.800" fill="none"/><rect x="2.400" y="4.400" width="3" height="3" fill="#bff3f8"/></svg><svg class="ic" style="left:591.5px;top:36.7px" viewBox="0 0 10 10"><path d="M1 3l2.400-2.200h5.800v5.400l-2.400 2.800h-5.800z" fill="#19bfd4"/><path d="M1 3h5.800v6h-5.800z" fill="#25d6ea"/><path d="M6.800 3l2.400-2.200v5.400l-2.400 2.800z" fill="#0f8fa4"/></svg><svg class="ic" style="left:614px;top:36.7px" viewBox="0 0 10 10"><path d="M1.400 2l3.600-1.400 3.600 1.400c0 4-1.400 6-3.600 7.400-2.200-1.400-3.600-3.400-3.600-7.400z" fill="#9d9d9d" stroke="#7d7d7d" stroke-width="0.600"/></svg><svg class="ic" style="left:625.5px;top:36.7px" viewBox="0 0 10 10"><rect x="0.800" y="1.400" width="8.400" height="6.400" fill="#fff" stroke="#333" stroke-width="0.900"/><path d="M1.400 2.400h7.200" stroke="#e8262a" stroke-width="1.400"/><path d="M1.600 5.800h6" stroke="#e8262a" stroke-width="0.800"/><path d="M6.800 7.600h3l-1.500 2.200z" fill="#000"/></svg><div class="sep" style="left:284px;top:36.0px"></div><div class="sep" style="left:447px;top:36.0px"></div><div class="sep" style="left:484px;top:36.0px"></div><div class="abs" style="left:45px;top:20px;width:20px;height:13px;background:linear-gradient(#e6ebf7 0,#d3dcf0 30%,#ced8ee 100%);"></div><div id="left" class="abs"></div><div class="abs" style="left:107.500px;top:49px;width:2.500px;height:465px;background:#fbfbfb"></div><div class="abs" style="left:0;top:48.8px;width:107.5px;height:8.2px;background:#fafafa"></div><div class="hdr" style="top:50px"></div><div class="t" style="left:2.5px;top:49.5px;font-size:6.3px;color:#33425c;font-weight:normal;transform:rotate(0.03deg) scaleX(0.847);-webkit-text-stroke:0.1px #33425c;">Entities</div><svg class="abs" style="left:102.2px;top:50.9px" width="4" height="4" viewBox="0 0 4 4"><path d="M0.4 0.4l3.2 3.2M3.6 0.4l-3.2 3.2" stroke="#111" stroke-width="1.2"/></svg><div class="abs" style="left:2px;top:56.300px;width:105px;height:1.100px;background:#747474"></div><div class="abs" style="left:2px;top:58.500px;width:1px;height:156px;background:#7c7c7c"></div><div class="abs" style="left:7px;top:59.800px;width:24px;height:9.200px;background:#fff;border-left:0.600px solid #d4d4d4;border-top:0.600px solid #d4d4d4;border-right:1px solid #505050;box-sizing:border-box"></div><div class="abs" style="left:31px;top:60.800px;width:24.200px;height:7.700px;background:#f2f2f2;border-top:0.800px solid #8c8c8c;border-right:1px solid #505050;box-sizing:border-box"></div><div class="abs" style="left:3px;top:68.500px;width:104px;height:1px;background:#8e8e8e"></div><div class="abs" style="left:7.500px;top:68.500px;width:22.500px;height:1px;background:#fff"></div><div class="t" style="left:9.2px;top:61.2px;font-size:6.4px;color:#0a0a0a;font-weight:normal;transform:rotate(0.03deg) scaleX(0.812);-webkit-text-stroke:0.15px #0a0a0a;">Parents</div><div class="t" style="left:33.4px;top:62px;font-size:6.4px;color:#0a0a0a;font-weight:normal;transform:rotate(0.03deg) scaleX(0.797);-webkit-text-stroke:0.15px #0a0a0a;">Children</div><div class="abs" style="left:3px;top:69.500px;width:104px;height:145px;background:#fff"></div><div class="abs" style="left:101px;top:69.500px;width:6px;height:145px;background:#f1f1f1"></div><div class="abs" style="left:101.500px;top:91px;width:5px;height:106px;background:linear-gradient(to right,#f4f4f4,#dcdcdc);box-shadow:0 0 0 0.500px #9a9a9a;border-radius:1px"></div><div class="abs" style="left:102.500px;top:143.300px;width:3px;height:0.8px;background:#777;box-shadow:0 1.500px 0 #777,0 3px 0 #777"></div><div class="abs" style="left:102px;top:71px;width:0;height:0;border-left:2px solid transparent;border-right:2px solid transparent;border-bottom:2.500px solid #222"></div><div class="abs" style="left:102px;top:209px;width:0;height:0;border-left:2px solid transparent;border-right:2px solid transparent;border-top:2.500px solid #222"></div><div class="abs" style="left:9.200px;top:73.4px;width:0.8px;height:112.14px;background-image:linear-gradient(to bottom,#b4b4b4 50%,transparent 50%);background-size:1px 1.600px"></div><div class="abs" style="left:9.500px;top:73.2px;width:5.500px;height:0.800px;background-image:linear-gradient(to right,#b4b4b4 50%,transparent 50%);background-size:1.600px 1px"></div><div class="abs" style="left:7.200px;top:71.10000000000001px;width:4.600px;height:4.600px;box-sizing:border-box;border:0.600px solid #a5a5a5;background:#fff"></div><div class="abs" style="left:8.200px;top:73.05000000000001px;width:2.600px;height:0.600px;background:#444"></div><div class="abs" style="left:9.150px;top:72.10000000000001px;width:0.600px;height:2.600px;background:#444"></div><svg class="abs" style="left:15px;top:69.60000000000001px" width="7.6" height="7.6" viewBox="0 0 8 8"><rect x="0" y="0" width="8" height="8" fill="#f6f046"/><path d="M1.6 1.8l4.8 4.6M6.400 1.800l-4.800 4.600" stroke="#222" stroke-width="1"/></svg><div class="t" style="left:25.3px;top:70.5px;font-size:6.4px;color:#0a0a0a;font-weight:normal;transform:rotate(0.03deg) scaleX(0.810);-webkit-text-stroke:0.15px #0a0a0a;">Points</div><div class="abs" style="left:9.500px;top:81.21000000000001px;width:5.500px;height:0.800px;background-image:linear-gradient(to right,#b4b4b4 50%,transparent 50%);background-size:1.600px 1px"></div><svg class="abs" style="left:15px;top:77.61000000000001px" width="7.6" height="7.6" viewBox="0 0 8 8"><path d="M0.400 1.200l1.800-0.800 5.400 5-1.600 2.200z" fill="#f6f046" stroke="#3a3a20" stroke-width="0.600" stroke-dasharray="1.2 0.800"/></svg><div class="t" style="left:25.3px;top:78.51px;font-size:6.4px;color:#0a0a0a;font-weight:normal;transform:rotate(0.03deg) scaleX(0.802);-webkit-text-stroke:0.15px #0a0a0a;">Planes</div><div class="abs" style="left:9.500px;top:89.22px;width:5.500px;height:0.800px;background-image:linear-gradient(to right,#b4b4b4 50%,transparent 50%);background-size:1.600px 1px"></div><svg class="abs" style="left:15px;top:85.62px" width="7.6" height="7.6" viewBox="0 0 8 8"><rect x="0" y="0" width="8" height="8" fill="#f6f046"/><path d="M1.400 0.800v6h6M1.400 6.800l3.600-3.200" stroke="#2233cc" stroke-width="1.100" fill="none"/></svg><div class="t" style="left:25.3px;top:86.52px;font-size:6.4px;color:#0a0a0a;font-weight:normal;transform:rotate(0.03deg) scaleX(0.765);-webkit-text-stroke:0.15px #0a0a0a;">Frames</div><div class="abs" style="left:9.500px;top:97.23px;width:5.500px;height:0.800px;background-image:linear-gradient(to right,#b4b4b4 50%,transparent 50%);background-size:1.600px 1px"></div><svg class="abs" style="left:15px;top:93.63000000000001px" width="7.6" height="7.6" viewBox="0 0 8 8"><rect x="0" y="0" width="8" height="8" fill="#f6f046"/><rect x="0.600" y="0.600" width="6.800" height="6.800" fill="none" stroke="#222" stroke-width="1"/><rect x="2.600" y="2.600" width="2.800" height="2.800" fill="none" stroke="#222" stroke-width="0.700"/></svg><div class="t" style="left:25.3px;top:94.53px;font-size:6.4px;color:#0a0a0a;font-weight:normal;transform:rotate(0.03deg) scaleX(0.826);-webkit-text-stroke:0.15px #0a0a0a;">Triangle Meshes</div><div class="abs" style="left:9.500px;top:105.24px;width:5.500px;height:0.800px;background-image:linear-gradient(to right,#b4b4b4 50%,transparent 50%);background-size:1.600px 1px"></div><svg class="abs" style="left:15px;top:101.64px" width="7.6" height="7.6" viewBox="0 0 8 8"><rect x="0" y="0" width="8" height="8" fill="#f6f046"/><path d="M0.800 0.800h5.600v3.600l-2.800 2.800h-2.800z" fill="none" stroke="#222" stroke-width="0.900"/><path d="M3 7l4.400-5.600" stroke="#d020c0" stroke-width="1.500"/></svg><div class="t" style="left:25.3px;top:102.53999999999999px;font-size:6.4px;color:#0a0a0a;font-weight:normal;transform:rotate(0.03deg) scaleX(0.795);-webkit-text-stroke:0.15px #0a0a0a;">Wireframes</div><div class="abs" style="left:9.500px;top:113.25px;width:5.500px;height:0.800px;background-image:linear-gradient(to right,#b4b4b4 50%,transparent 50%);background-size:1.600px 1px"></div><div class="abs" style="left:7.200px;top:111.15px;width:4.600px;height:4.600px;box-sizing:border-box;border:0.600px solid #a5a5a5;background:#fff"></div><div class="abs" style="left:8.200px;top:113.10000000000001px;width:2.600px;height:0.600px;background:#444"></div><div class="abs" style="left:9.150px;top:112.15px;width:0.600px;height:2.600px;background:#444"></div><svg class="abs" style="left:15px;top:109.65px" width="7.6" height="7.6" viewBox="0 0 8 8"><rect x="0" y="0" width="8" height="8" fill="#f6f046"/><path d="M1 1.400h6v5.600h-6z" fill="#f0b020" stroke="#c03a10" stroke-width="0.800"/><path d="M2.200 6l1-3.600M4.400 6.400l0.800-4M6 6l0.400-3" stroke="#e8262a" stroke-width="0.800"/></svg><div class="t" style="left:25.3px;top:110.55px;font-size:6.4px;color:#0a0a0a;font-weight:normal;transform:rotate(0.03deg) scaleX(0.805);-webkit-text-stroke:0.15px #0a0a0a;">Contours</div><div class="abs" style="left:9.500px;top:121.26px;width:5.500px;height:0.800px;background-image:linear-gradient(to right,#b4b4b4 50%,transparent 50%);background-size:1.600px 1px"></div><svg class="abs" style="left:15px;top:117.66000000000001px" width="7.6" height="7.6" viewBox="0 0 8 8"><rect x="0" y="0" width="8" height="8" fill="#f6f046"/><path d="M0.800 2.600l1.600-1.800h5v4.400l-1.600 2h-5z" fill="#f2e21d" stroke="#222" stroke-width="0.900"/><path d="M0.800 2.600h5v4.600M5.800 2.600l1.600-1.800" stroke="#222" stroke-width="0.700" fill="none"/></svg><div class="t" style="left:25.3px;top:118.56px;font-size:6.4px;color:#0a0a0a;font-weight:normal;transform:rotate(0.03deg) scaleX(0.786);-webkit-text-stroke:0.15px #0a0a0a;">Solids</div><div class="abs" style="left:9.500px;top:129.27px;width:5.500px;height:0.800px;background-image:linear-gradient(to right,#b4b4b4 50%,transparent 50%);background-size:1.600px 1px"></div><svg class="abs" style="left:15px;top:125.67px" width="7.6" height="7.6" viewBox="0 0 8 8"><rect x="0" y="0" width="8" height="8" fill="#f6f046"/><path d="M0.800 0.800h6.400v6.400h-6.400z" fill="none" stroke="#222" stroke-width="0.900"/><path d="M0.800 4c2-1.600 4.400 1.600 6.400 0M4 0.800c-1.200 2 1.200 4.400 0 6.400" stroke="#222" stroke-width="0.900" fill="none"/></svg><div class="t" style="left:25.3px;top:126.57px;font-size:6.4px;color:#0a0a0a;font-weight:normal;transform:rotate(0.03deg) scaleX(0.809);-webkit-text-stroke:0.15px #0a0a0a;">Composite Surfaces</div><div class="abs" style="left:9.500px;top:137.28000000000003px;width:5.500px;height:0.800px;background-image:linear-gradient(to right,#b4b4b4 50%,transparent 50%);background-size:1.600px 1px"></div><svg class="abs" style="left:15px;top:133.68px" width="7.6" height="7.6" viewBox="0 0 8 8"><rect x="0" y="0" width="8" height="8" fill="#f6f046"/><path d="M1.400 6.400v-3.600l1.600-1.600h3.600" stroke="#e8262a" stroke-width="1.100" fill="none" stroke-dasharray="1.600 0.800"/></svg><div class="t" style="left:25.3px;top:134.58px;font-size:6.4px;color:#0a0a0a;font-weight:normal;transform:rotate(0.03deg) scaleX(0.819);-webkit-text-stroke:0.15px #0a0a0a;">Relabels</div><div class="abs" style="left:9.500px;top:145.29000000000002px;width:5.500px;height:0.800px;background-image:linear-gradient(to right,#b4b4b4 50%,transparent 50%);background-size:1.600px 1px"></div><svg class="abs" style="left:15px;top:141.69px" width="7.6" height="7.6" viewBox="0 0 8 8"><rect x="0" y="0" width="8" height="8" fill="#f6f046"/><path d="M0.600 2.400h6.800v3.400h-6.800z" fill="#fff" stroke="#222" stroke-width="0.800"/><path d="M1.400 4.800c1-2.400 2-2.400 2.600 0s1.800 1.600 2.600-1.200" stroke="#2233cc" stroke-width="0.700" fill="none"/></svg><div class="t" style="left:25.3px;top:142.59px;font-size:6.4px;color:#0a0a0a;font-weight:normal;transform:rotate(0.03deg) scaleX(0.791);-webkit-text-stroke:0.15px #0a0a0a;">Graphs</div><div class="abs" style="left:9.500px;top:153.3px;width:5.500px;height:0.800px;background-image:linear-gradient(to right,#b4b4b4 50%,transparent 50%);background-size:1.600px 1px"></div><svg class="abs" style="left:15px;top:149.7px" width="7.6" height="7.6" viewBox="0 0 8 8"><rect x="0" y="0" width="8" height="8" fill="#f6f046"/><path d="M1.200 7v-3l2.400-2.600h1.200" stroke="#222" stroke-width="1" fill="none" stroke-dasharray="1.400 0.800"/><rect x="5.800" y="0.600" width="1.400" height="1.400" fill="#222"/></svg><div class="t" style="left:25.3px;top:150.6px;font-size:6.4px;color:#0a0a0a;font-weight:normal;transform:rotate(0.03deg) scaleX(0.798);-webkit-text-stroke:0.15px #0a0a0a;">Knotlists</div><div class="abs" style="left:9.500px;top:161.31px;width:5.500px;height:0.800px;background-image:linear-gradient(to right,#b4b4b4 50%,transparent 50%);background-size:1.600px 1px"></div><svg class="abs" style="left:15px;top:157.70999999999998px" width="7.6" height="7.6" viewBox="0 0 8 8"><rect x="0" y="0" width="8" height="8" fill="#f6f046"/><path d="M0.800 2l2.600 3.600M3.400 2l-2.600 3.600M4.600 3.200h2.800M4.600 4.800h2.800" stroke="#222" stroke-width="0.900"/></svg><div class="t" style="left:25.3px;top:158.60999999999999px;font-size:6.4px;color:#0a0a0a;font-weight:normal;transform:rotate(0.03deg) scaleX(0.797);-webkit-text-stroke:0.15px #0a0a0a;">Variables &amp; Formulas</div><div class="abs" style="left:9.500px;top:169.32000000000002px;width:5.500px;height:0.800px;background-image:linear-gradient(to right,#b4b4b4 50%,transparent 50%);background-size:1.600px 1px"></div><svg class="abs" style="left:15px;top:165.72px" width="7.6" height="7.6" viewBox="0 0 8 8"><path d="M0.400 8l3-7.600h1.400l3 7.600h-1.600l-0.600-1.800h-3l-0.600 1.800zM3 4.800h2.200l-1.100-3z" fill="#111"/></svg><div class="t" style="left:25.3px;top:166.62px;font-size:6.4px;color:#0a0a0a;font-weight:normal;transform:rotate(0.03deg) scaleX(0.849);-webkit-text-stroke:0.15px #0a0a0a;">Text Labels</div><div class="abs" style="left:9.500px;top:177.33px;width:5.500px;height:0.800px;background-image:linear-gradient(to right,#b4b4b4 50%,transparent 50%);background-size:1.600px 1px"></div><svg class="abs" style="left:15px;top:173.73px" width="7.6" height="7.6" viewBox="0 0 8 8"><rect x="0" y="0" width="8" height="8" fill="#f6f046"/><path d="M1.200 2.800h5.600M1.200 5.200h5.600" stroke="#111" stroke-width="1.300"/></svg><div class="t" style="left:25.3px;top:174.63px;font-size:6.4px;color:#0a0a0a;font-weight:normal;transform:rotate(0.03deg) scaleX(0.830);-webkit-text-stroke:0.15px #0a0a0a;">Solve Sets</div><div class="abs" style="left:9.500px;top:185.34000000000003px;width:5.500px;height:0.800px;background-image:linear-gradient(to right,#b4b4b4 50%,transparent 50%);background-size:1.600px 1px"></div><div class="abs" style="left:7.200px;top:183.24px;width:4.600px;height:4.600px;box-sizing:border-box;border:0.600px solid #a5a5a5;background:#fff"></div><div class="abs" style="left:8.200px;top:185.19000000000003px;width:2.600px;height:0.600px;background:#444"></div><svg class="abs" style="left:15px;top:181.74px" width="7.6" height="7.6" viewBox="0 0 8 8"><rect x="0" y="0" width="8" height="8" fill="#f6f046"/><rect x="1" y="0.800" width="6" height="6.600" fill="#d9cd3c" stroke="#5a5210" stroke-width="0.800"/><path d="M2 2.600h4M2 4.200h4M2 5.800h4" stroke="#5a5210" stroke-width="0.700"/></svg><div class="t" style="left:25.3px;top:182.64000000000001px;font-size:6.4px;color:#0a0a0a;font-weight:normal;transform:rotate(0.03deg) scaleX(0.808);-webkit-text-stroke:0.15px #0a0a0a;">Entity Lists</div><div class="abs" style="left:18.600px;top:189.54000000000002px;width:0.8px;height:20.03px;background-image:linear-gradient(to bottom,#b4b4b4 50%,transparent 50%);background-size:1px 1.600px"></div><div class="abs" style="left:19px;top:193.35000000000002px;width:5.500px;height:0.800px;background-image:linear-gradient(to right,#b4b4b4 50%,transparent 50%);background-size:1.600px 1px"></div><div class="abs" style="left:16.600px;top:191.25px;width:4.600px;height:4.600px;box-sizing:border-box;border:0.600px solid #a5a5a5;background:#fff"></div><div class="abs" style="left:17.600px;top:193.20000000000002px;width:2.600px;height:0.600px;background:#444"></div><div class="abs" style="left:18.550px;top:192.25px;width:0.600px;height:2.600px;background:#444"></div><svg class="abs" style="left:24.600px;top:189.75px" width="7.6" height="7.6" viewBox="0 0 8 8"><rect x="0" y="0" width="8" height="8" fill="#f6f046"/><rect x="1" y="0.800" width="6" height="6.600" fill="#d9cd3c" stroke="#5a5210" stroke-width="0.800"/><path d="M2 2.600h4M2 4.200h4M2 5.800h4" stroke="#5a5210" stroke-width="0.700"/></svg><div class="t" style="left:35.2px;top:190.65px;font-size:6.4px;color:#0a0a0a;font-weight:normal;transform:rotate(0.03deg) scaleX(0.825);-webkit-text-stroke:0.15px #0a0a0a;">edit_boat_0</div><div class="abs" style="left:19px;top:201.36px;width:5.500px;height:0.800px;background-image:linear-gradient(to right,#b4b4b4 50%,transparent 50%);background-size:1.600px 1px"></div><div class="abs" style="left:16.600px;top:199.26px;width:4.600px;height:4.600px;box-sizing:border-box;border:0.600px solid #a5a5a5;background:#fff"></div><div class="abs" style="left:17.600px;top:201.21px;width:2.600px;height:0.600px;background:#444"></div><div class="abs" style="left:18.550px;top:200.26px;width:0.600px;height:2.600px;background:#444"></div><svg class="abs" style="left:24.600px;top:197.76px" width="7.6" height="7.6" viewBox="0 0 8 8"><rect x="0" y="0" width="8" height="8" fill="#f6f046"/><rect x="1" y="0.800" width="6" height="6.600" fill="#d9cd3c" stroke="#5a5210" stroke-width="0.800"/><path d="M2 2.600h4M2 4.200h4M2 5.800h4" stroke="#5a5210" stroke-width="0.700"/></svg><div class="t" style="left:35.2px;top:198.66px;font-size:6.4px;color:#0a0a0a;font-weight:normal;transform:rotate(0.03deg) scaleX(0.843);-webkit-text-stroke:0.15px #0a0a0a;">view_boat_0</div><div class="abs" style="left:19px;top:209.37px;width:5.500px;height:0.800px;background-image:linear-gradient(to right,#b4b4b4 50%,transparent 50%);background-size:1.600px 1px"></div><div class="abs" style="left:16.600px;top:207.26999999999998px;width:4.600px;height:4.600px;box-sizing:border-box;border:0.600px solid #a5a5a5;background:#fff"></div><div class="abs" style="left:17.600px;top:209.22px;width:2.600px;height:0.600px;background:#444"></div><div class="abs" style="left:18.550px;top:208.26999999999998px;width:0.600px;height:2.600px;background:#444"></div><svg class="abs" style="left:24.600px;top:205.76999999999998px" width="7.6" height="7.6" viewBox="0 0 8 8"><rect x="0" y="0" width="8" height="8" fill="#f6f046"/><rect x="1" y="0.800" width="6" height="6.600" fill="#d9cd3c" stroke="#5a5210" stroke-width="0.800"/><path d="M2 2.600h4M2 4.200h4M2 5.800h4" stroke="#5a5210" stroke-width="0.700"/></svg><div class="t" style="left:35.2px;top:206.67px;font-size:6.4px;color:#0a0a0a;font-weight:normal;transform:rotate(0.03deg) scaleX(0.827);-webkit-text-stroke:0.15px #0a0a0a;">view_lines_0</div><div class="abs" style="left:0;top:215.500px;width:107.500px;height:1.200px;background:#fdfdfd"></div><div class="abs" style="left:0;top:216.70000000000002px;width:107.5px;height:8.2px;background:#fafafa"></div><div class="hdr" style="top:217.9px"></div><div class="t" style="left:2.5px;top:217.4px;font-size:6.3px;color:#33425c;font-weight:normal;transform:rotate(0.03deg) scaleX(0.871);-webkit-text-stroke:0.1px #33425c;">Properties</div><svg class="abs" style="left:102.2px;top:218.8px" width="4" height="4" viewBox="0 0 4 4"><path d="M0.4 0.4l3.2 3.2M3.6 0.4l-3.2 3.2" stroke="#111" stroke-width="1.2"/></svg><div class="abs" style="left:2px;top:225px;width:105px;height:1px;background:#7c7c7c"></div><div class="abs" style="left:2px;top:226px;width:1px;height:149px;background:#7c7c7c"></div><div class="abs" style="left:3px;top:232.600px;width:104px;height:1px;background:#8f8f8f"></div><div class="abs" style="left:3px;top:233.600px;width:104px;height:1.4px;background:#fbfbfb"></div><div class="abs" style="left:98.500px;top:226.500px;width:5.500px;height:6px;background:#efe23a;box-shadow:0 0 0 0.500px #6b6414"></div><div class="t" style="left:99.6px;top:226.3px;font-size:6.5px;color:#222;font-weight:bold;transform:rotate(0.03deg);">?</div><div class="abs" style="left:0;top:376.500px;width:107.500px;height:1.200px;background:#fdfdfd"></div><div class="abs" style="left:0;top:377.8px;width:107.5px;height:8.2px;background:#fafafa"></div><div class="hdr" style="top:379px"></div><div class="t" style="left:2.5px;top:378.5px;font-size:6.3px;color:#33425c;font-weight:normal;transform:rotate(0.03deg) scaleX(0.857);-webkit-text-stroke:0.1px #33425c;">Selection Set</div><svg class="abs" style="left:102.2px;top:379.9px" width="4" height="4" viewBox="0 0 4 4"><path d="M0.4 0.4l3.2 3.2M3.6 0.4l-3.2 3.2" stroke="#111" stroke-width="1.2"/></svg><div class="abs" style="left:2px;top:386.300px;width:105px;height:1px;background:#7c7c7c"></div><div class="abs" style="left:2px;top:387px;width:1px;height:125px;background:#7c7c7c"></div><div class="abs" style="left:6px;top:388.300px;width:10.500px;height:8.800px;box-sizing:border-box;background:#f0f0f0;border-right:0.800px solid #8c8c8c;border-bottom:0.800px solid #8c8c8c;border-top:0.600px solid #fff;border-left:0.600px solid #fff"></div><div class="abs" style="left:18px;top:388.300px;width:10.500px;height:8.800px;box-sizing:border-box;background:#f0f0f0;border-right:0.800px solid #8c8c8c;border-bottom:0.800px solid #8c8c8c;border-top:0.600px solid #fff;border-left:0.600px solid #fff"></div><div class="abs" style="left:30px;top:388.300px;width:10.500px;height:8.800px;box-sizing:border-box;background:#f0f0f0;border-right:0.800px solid #8c8c8c;border-bottom:0.800px solid #8c8c8c;border-top:0.600px solid #fff;border-left:0.600px solid #fff"></div><div class="abs" style="left:42px;top:388.300px;width:10.500px;height:8.800px;box-sizing:border-box;background:#f0f0f0;border-right:0.800px solid #8c8c8c;border-bottom:0.800px solid #8c8c8c;border-top:0.600px solid #fff;border-left:0.600px solid #fff"></div><div class="abs" style="left:53.6px;top:388.300px;width:10.500px;height:8.800px;box-sizing:border-box;background:#f0f0f0;border-right:0.800px solid #8c8c8c;border-bottom:0.800px solid #8c8c8c;border-top:0.600px solid #fff;border-left:0.600px solid #fff"></div><svg class="abs" style="left:6.800px;top:389.300px" width="8" height="7" viewBox="0 0 8 7"><path d="M0.600 0.600h6.800v5.800h-6.800zM2.800 0.600v5.800M5.200 0.600v5.800M0.600 2.400h6.800" stroke="#222" stroke-width="0.900" fill="#e8e8e8"/></svg><svg class="abs" style="left:19px;top:389.300px" width="8" height="7" viewBox="0 0 8 7"><path d="M4 6.400v-5.400M1.800 3l2.200-2.200 2.200 2.200" stroke="#555" stroke-width="0.900" fill="none"/></svg><svg class="abs" style="left:31px;top:389.300px" width="8" height="7" viewBox="0 0 8 7"><path d="M4.400 0.600v5.400M2.200 3.800l2.200 2.200 1.800-2M2 2.400h3" stroke="#777" stroke-width="0.900" fill="none"/></svg><svg class="abs" style="left:43px;top:389.300px" width="8" height="7" viewBox="0 0 8 7"><path d="M1 0.600l6 5.800M7 0.600l-6 5.800" stroke="#9a9a9a" stroke-width="0.900" fill="none"/></svg><svg class="abs" style="left:54.600px;top:389.300px" width="8" height="7" viewBox="0 0 8 7"><path d="M0.800 0.600h6.400v5.800h-6.400z" fill="#dcdcdc" stroke="#9a9a9a" stroke-width="0.800"/><path d="M1.800 1.400l4.400 4.200M6.200 1.400l-4.400 4.200" stroke="#8a8a8a" stroke-width="0.800"/></svg><div class="t" style="left:66.9px;top:389.7px;font-size:6.4px;color:#111;font-weight:normal;transform:rotate(0.03deg) scaleX(0.813);">0 Entities</div><div class="abs" style="left:4.600px;top:399px;width:101px;height:113px;background:#fff;border-left:0.800px solid #7a7a7a;border-top:0.800px solid #7a7a7a;box-sizing:border-box"></div><div class="abs" style="left:5.500px;top:400px;width:99.500px;height:8px;background:linear-gradient(#fff,#ececec);border-bottom:0.900px solid #8f8f8f;box-sizing:border-box"></div><div class="abs" style="left:56px;top:400px;width:0.900px;height:8px;background:#8f8f8f"></div><div class="t" style="left:9px;top:401px;font-size:6.3px;color:#111;font-weight:normal;transform:rotate(0.03deg) scaleX(0.833);">Name</div><div class="t" style="left:60px;top:401px;font-size:6.3px;color:#111;font-weight:normal;transform:rotate(0.03deg) scaleX(0.879);">Type</div><div class="abs" style="left:5.500px;top:507.500px;width:99.500px;height:4px;background:linear-gradient(#f6f6f6,#d9d9d9)"></div><div class="abs" style="left:9px;top:507.800px;width:86px;height:3.400px;background:linear-gradient(#fafafa,#d2d2d2);box-shadow:0 0 0 0.500px #999"></div><div class="abs" style="left:6px;top:508px;width:0;height:0;border-top:1.600px solid transparent;border-bottom:1.600px solid transparent;border-right:2px solid #111"></div><div class="abs" style="left:103.800px;top:507.800px;width:0;height:0;border-top:1.800px solid transparent;border-bottom:1.800px solid transparent;border-left:2.200px solid #111"></div><div id="canvas" class="abs"><svg class="abs" style="left:0;top:0" width="589" height="465" viewBox="0 0 589 465" fill="none" stroke-linecap="butt" stroke-linejoin="round"><g stroke="#d64a4a" stroke-width="1.0"><path d="M340.0 186.6C348.3 186.1 373.3 184.2 390.0 183.3C406.7 182.4 422.5 181.4 440.0 181.0C457.5 180.6 477.3 180.4 495.0 181.0C512.7 181.6 537.5 184.0 546.0 184.6"/><path d="M26.0 240.6C48.3 237.7 114.3 228.8 160.0 223.4C205.7 218.0 265.0 211.7 300.0 208.3C335.0 204.9 346.7 204.3 370.0 203.0C393.3 201.7 420.0 200.8 440.0 200.4C460.0 200.0 473.8 200.2 490.0 200.4C506.2 200.6 529.2 201.2 537.0 201.4"/><path d="M27.4 253.6C49.5 251.0 114.6 243.0 160.0 238.2C205.4 233.4 265.0 227.9 300.0 225.0C335.0 222.1 346.7 222.1 370.0 221.0C393.3 219.9 414.0 218.8 440.0 218.5C466.0 218.2 511.7 218.9 526.0 219.0"/><path d="M29.4 266.0C51.2 263.9 114.9 257.6 160.0 253.6C205.1 249.6 265.0 244.6 300.0 242.0C335.0 239.4 346.7 239.1 370.0 238.0C393.3 236.9 415.5 235.9 440.0 235.5C464.5 235.1 504.2 235.3 517.0 235.3"/><path d="M61.4 286.7C71.2 285.5 103.6 281.3 120.0 279.6C136.4 277.9 130.0 278.7 160.0 276.6C190.0 274.5 265.0 269.1 300.0 267.0C335.0 264.9 346.7 264.8 370.0 264.0C393.3 263.2 419.2 262.7 440.0 262.2C460.8 261.7 485.8 261.2 495.0 261.0"/><path d="M100.0 292.7C103.3 292.3 110.0 291.4 120.0 290.3C130.0 289.2 130.0 288.4 160.0 286.0C190.0 283.6 265.0 278.2 300.0 276.0C335.0 273.8 346.7 273.9 370.0 273.0C393.3 272.1 420.8 271.2 440.0 270.6C459.2 270.0 477.5 269.8 485.0 269.6"/><path d="M115.0 295.6C122.5 295.2 129.2 295.1 160.0 293.4C190.8 291.7 265.0 287.3 300.0 285.4C335.0 283.5 346.7 283.1 370.0 282.0C393.3 280.9 423.7 279.4 440.0 278.8C456.3 278.2 463.3 278.6 468.0 278.6"/><path d="M186.0 299.0C195.0 298.7 221.0 298.0 240.0 297.3C259.0 296.6 276.7 295.7 300.0 294.6C323.3 293.5 366.7 291.3 380.0 290.6"/></g><g stroke="#14c4d2" stroke-width="1.0"><path d="M31.4 276.8C41.2 276.6 75.2 276.0 90.0 275.6C104.8 275.2 108.3 275.1 120.0 274.4C131.7 273.7 148.3 272.4 160.0 271.4C171.7 270.4 181.7 269.4 190.0 268.4C198.3 267.4 201.7 267.0 210.0 265.5C218.3 264.0 230.0 262.2 240.0 259.4C250.0 256.5 260.0 252.2 270.0 248.4C280.0 244.6 287.3 242.1 300.0 236.4C312.7 230.7 329.0 222.9 346.0 214.0C363.0 205.1 389.7 189.3 402.0 183.0C414.3 176.7 417.0 177.2 420.0 176.0"/><path d="M41.4 283.6C54.5 283.4 100.2 282.8 120.0 282.4C139.8 282.0 141.7 282.2 160.0 281.0C178.3 279.8 206.7 277.9 230.0 275.4C253.3 272.9 280.0 269.5 300.0 266.0C320.0 262.5 337.7 258.0 350.0 254.4C362.3 250.8 370.0 246.2 374.0 244.5"/><path d="M374.0 244.5C379.0 240.2 393.0 226.8 404.0 218.4C415.0 210.0 428.7 201.7 440.0 194.0C451.3 186.3 466.7 175.7 472.0 172.0"/><path d="M57.0 287.4C67.5 287.7 102.8 288.9 120.0 289.3C137.2 289.7 141.7 290.4 160.0 290.0C178.3 289.6 206.7 288.8 230.0 287.0C253.3 285.2 278.3 282.5 300.0 279.5C321.7 276.5 342.0 273.1 360.0 269.0C378.0 264.9 396.3 258.9 408.0 254.6C419.7 250.3 424.2 246.2 430.0 243.0C435.8 239.8 440.8 236.8 443.0 235.5"/><path d="M443.0 235.5C445.0 232.8 448.7 225.8 455.0 219.0C461.3 212.2 472.2 203.1 481.0 195.0C489.8 186.9 503.5 174.7 508.0 170.6"/><path d="M118.0 295.6C125.0 295.6 141.3 295.7 160.0 295.4C178.7 295.1 206.7 294.9 230.0 294.0C253.3 293.1 276.7 292.5 300.0 290.3C323.3 288.1 350.0 284.4 370.0 281.0C390.0 277.6 408.3 272.9 420.0 270.0C431.7 267.1 433.2 266.5 440.0 263.5C446.8 260.5 453.0 257.7 461.0 252.0C469.0 246.3 483.5 233.2 488.0 229.5"/><path d="M488.0 229.5C489.2 227.4 490.5 223.4 495.0 217.0C499.5 210.6 508.4 198.7 515.0 191.0C521.6 183.3 531.2 174.0 534.4 170.6"/></g><g stroke="#dcd61e" stroke-width="1.0"><path d="M60.4 231.4C60.7 234.3 61.2 242.7 62.0 249.0C62.8 255.3 64.2 264.6 65.0 269.0C65.8 273.4 64.8 273.1 67.0 275.4C69.2 277.7 74.2 280.7 78.0 283.0C81.8 285.3 85.3 287.1 90.0 289.0C94.7 290.9 103.3 293.4 106.0 294.3"/><path d="M97.6 226.0C98.0 229.2 98.9 238.2 100.0 245.0C101.1 251.8 103.0 262.3 104.0 267.0C105.0 271.7 104.0 270.9 106.0 273.2C108.0 275.5 112.3 278.4 116.0 281.0C119.7 283.6 122.7 286.2 128.0 289.0C133.3 291.8 144.7 296.2 148.0 297.6"/><path d="M137.6 220.0C138.2 223.5 139.8 234.2 141.0 241.0C142.2 247.8 143.8 256.1 145.0 261.0C146.2 265.9 145.5 266.5 148.0 270.2C150.5 273.9 153.5 278.6 160.0 283.4C166.5 288.2 182.5 296.4 187.0 299.0"/><path d="M181.0 212.6C181.8 216.5 184.5 228.1 186.0 236.0C187.5 243.9 189.1 254.9 190.0 260.0C190.9 265.1 188.9 263.3 191.6 266.8C194.3 270.3 201.3 276.6 206.0 281.0C210.7 285.4 215.8 289.9 220.0 293.0C224.2 296.1 229.2 298.3 231.0 299.4"/><path d="M229.0 205.0C230.0 209.5 233.3 223.8 235.0 232.0C236.7 240.2 238.1 249.1 239.0 254.0C239.9 258.9 238.2 257.9 240.4 261.6C242.6 265.3 248.1 271.4 252.0 276.0C255.9 280.6 260.0 285.3 264.0 289.0C268.0 292.7 274.0 296.8 276.0 298.4"/><path d="M281.0 196.0C282.2 201.3 286.0 218.7 288.0 228.0C290.0 237.3 291.7 246.8 293.0 252.0C294.3 257.2 294.8 257.3 296.0 259.5C297.2 261.7 295.0 258.9 300.0 265.0C305.0 271.1 321.7 290.8 326.0 296.0"/><path d="M338.0 187.0C339.2 191.2 343.0 204.2 345.0 212.0C347.0 219.8 348.7 228.1 350.0 234.0C351.3 239.9 351.7 243.1 353.0 247.4C354.3 251.7 356.2 256.1 358.0 260.0C359.8 263.9 360.7 265.8 364.0 271.0C367.3 276.2 375.7 287.7 378.0 291.0"/><path d="M402.0 178.4C403.2 182.3 406.8 194.1 409.0 202.0C411.2 209.9 413.5 219.8 415.0 226.0C416.5 232.2 416.8 234.7 418.0 239.0C419.2 243.3 420.3 247.0 422.0 252.0C423.7 257.0 425.9 263.4 428.0 269.0C430.1 274.6 433.3 282.8 434.4 285.6"/><path d="M474.0 171.4C475.2 175.3 478.8 185.7 481.0 195.0C483.2 204.3 485.2 218.0 487.0 227.0C488.8 236.0 490.7 243.2 492.0 249.0C493.3 254.8 494.5 259.5 495.0 261.6"/></g><g stroke="#dedede" stroke-width="1.0"><path d="M25.4 236.4C31.2 235.6 48.4 233.1 60.4 231.4C72.4 229.7 84.7 227.9 97.6 226.0C110.5 224.1 123.7 222.2 137.6 220.0C151.5 217.8 165.8 215.1 181.0 212.6C196.2 210.1 212.3 207.8 229.0 205.0C245.7 202.2 262.8 199.0 281.0 196.0C299.2 193.0 317.8 189.9 338.0 187.0C358.2 184.1 385.0 180.5 402.0 178.4C419.0 176.3 428.0 175.7 440.0 174.5C452.0 173.3 461.5 172.2 474.0 171.4C486.5 170.7 504.8 170.2 515.0 170.0C525.2 169.8 528.3 170.1 535.0 170.4C541.7 170.7 551.7 171.7 555.0 172.0"/><path d="M25.4 236.4C25.6 239.3 26.2 249.9 26.6 254.0C27.0 258.1 27.4 257.9 27.9 261.0C28.4 264.1 29.2 269.7 29.7 272.4C30.2 275.1 30.0 276.1 30.7 277.4C31.3 278.7 31.8 279.4 33.6 280.3C35.4 281.2 38.2 281.9 41.4 283.0C44.6 284.1 49.3 285.7 52.9 286.7C56.5 287.7 57.7 288.2 62.9 289.0C68.1 289.8 76.9 290.8 84.0 291.7C91.1 292.6 99.7 293.6 105.7 294.3C111.7 295.0 113.6 295.2 120.0 295.7C126.4 296.2 137.3 297.0 144.0 297.4C150.7 297.8 145.7 297.9 160.0 298.2C174.3 298.5 210.7 299.4 230.0 299.4C249.3 299.4 264.3 298.8 276.0 298.4C287.7 298.0 291.7 297.6 300.0 297.2C308.3 296.8 313.0 297.0 326.0 296.0C339.0 295.0 362.3 292.4 378.0 291.0C393.7 289.6 410.5 288.3 420.0 287.5C429.5 286.7 430.0 286.6 435.0 286.0C440.0 285.4 444.2 285.2 450.0 284.0C455.8 282.8 464.0 281.3 470.0 279.0C476.0 276.7 481.8 272.8 486.0 270.0C490.2 267.2 492.0 264.9 495.0 262.0C498.0 259.1 500.8 256.3 504.0 252.6C507.2 248.9 511.3 243.9 514.0 240.0C516.7 236.1 517.8 232.7 520.0 229.0C522.2 225.3 524.2 222.7 527.0 218.0C529.8 213.3 533.7 206.5 537.0 201.0C540.3 195.5 544.0 189.8 547.0 185.0C550.0 180.2 553.7 174.2 555.0 172.0"/><path d="M30.7 277.4C36.7 277.0 54.4 276.0 67.0 275.3C79.5 274.6 90.5 274.0 106.0 273.0C121.5 272.0 145.7 270.4 160.0 269.3C174.3 268.2 178.7 267.9 192.0 266.6C205.3 265.3 222.0 263.7 240.0 261.6C258.0 259.5 277.7 256.9 300.0 254.0C322.3 251.2 350.7 247.5 374.0 244.5C397.3 241.5 421.2 238.4 440.0 236.0C458.8 233.6 473.5 231.4 487.0 230.0C500.5 228.6 515.3 227.8 521.0 227.4"/><path d="M230.0 262.6C235.0 262.2 248.3 261.1 260.0 260.4C271.7 259.7 281.7 259.3 300.0 258.4C318.3 257.5 346.7 255.9 370.0 255.0C393.3 254.1 417.7 253.2 440.0 252.8C462.3 252.4 493.3 252.6 504.0 252.5"/></g><path d="M1.0 289.7L560.0 248.4" stroke="#c8c8c8" stroke-width="1.1" stroke-dasharray="1.1 2.9"/><path d="M560.0 248.4L590.0 246.2" stroke="#c8c8c8" stroke-width="1.1" stroke-dasharray="1.1 2.9"/><path d="M485.7 202.6L588.0 265.7" stroke="#c8c8c8" stroke-width="1.1" stroke-dasharray="1.1 2.9"/><path d="M547.8 31.0L560.0 248.4" stroke="#c8c8c8" stroke-width="1.1" stroke-dasharray="1.1 2.9"/><path d="M560.0 248.4L572.2 456.0" stroke="#c8c8c8" stroke-width="1.1" stroke-dasharray="1.1 2.9"/><text x="2.700000000000003" y="297.2" font-family="Liberation Sans, sans-serif" font-size="7.6" fill="#ffffff" stroke="#ffffff" stroke-width="0.3" text-anchor="middle">X</text><text x="471.4" y="200.1" font-family="Liberation Sans, sans-serif" font-size="7.6" fill="#ffffff" stroke="#ffffff" stroke-width="0.3" text-anchor="middle">Y</text><text x="549" y="26.700000000000003" font-family="Liberation Sans, sans-serif" font-size="7.6" fill="#ffffff" stroke="#ffffff" stroke-width="0.3" text-anchor="middle">Z</text><rect x="469" y="192.8" width="1.2" height="1.2" fill="#bbb" stroke="none"/></svg></div><div id="status" class="abs"></div><div class="abs" style="left:0;top:513.500px;width:700px;height:1px;background:#fafafa"></div><div class="abs" style="left:0;top:521.600px;width:700px;height:1px;background:#fcfcfc"></div><div class="abs" style="left:0;top:522.600px;width:700px;height:2.400px;background:linear-gradient(#a9b8cd,#7f93b1)"></div><div class="abs" style="left:280px;top:515.500px;width:1px;height:6px;background:#c9c9c9"></div><div class="abs" style="left:440.5px;top:515.500px;width:1px;height:6px;background:#c9c9c9"></div><div class="abs" style="left:495px;top:515.500px;width:1px;height:6px;background:#c9c9c9"></div><div class="abs" style="left:539px;top:515.500px;width:1px;height:6px;background:#c9c9c9"></div><div class="abs" style="left:583.5px;top:515.500px;width:1px;height:6px;background:#c9c9c9"></div><div class="abs" style="left:646.5px;top:515.500px;width:1px;height:6px;background:#c9c9c9"></div><div class="t" style="left:282px;top:516.3px;font-size:6.2px;color:#111;font-weight:normal;transform:rotate(0.03deg) scaleX(0.754);">L:0</div><div class="t" style="left:498.5px;top:516.3px;font-size:6.2px;color:#111;font-weight:normal;transform:rotate(0.03deg) scaleX(0.899);">Lat -10.0</div><div class="t" style="left:542.3px;top:516.3px;font-size:6.2px;color:#111;font-weight:normal;transform:rotate(0.03deg) scaleX(0.870);">Lon 60.0</div><div class="t" style="left:585.6px;top:516.3px;font-size:6.2px;color:#111;font-weight:normal;transform:rotate(0.03deg) scaleX(0.892);">Radius 14.2</div><div class="t" style="left:649.5px;top:516.3px;font-size:6.2px;color:#111;font-weight:normal;transform:rotate(0.03deg) scaleX(0.952);">Tilt 0.0</div></div></body></html>
